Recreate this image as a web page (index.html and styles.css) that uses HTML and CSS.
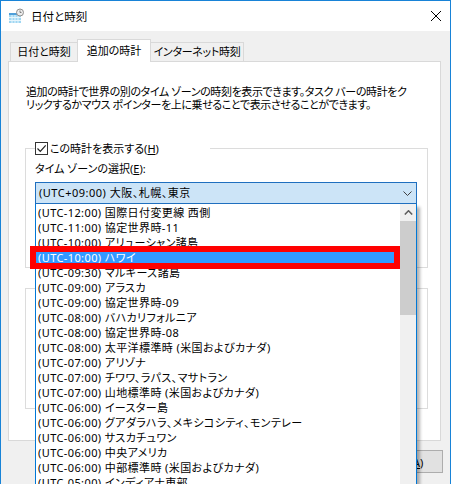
FILE: index.html
```html
<!DOCTYPE html>
<html lang="ja">

<head>
    <meta charset="UTF-8">
    <title>日付と時刻</title>
    <link rel="stylesheet" href="styles.css">
</head>

<body>
    <div class="window">
        <div class="titlebar">
            <svg class="appIcon" width="16" height="16" viewBox="0 0 16 16">
                <rect x="1" y="5" width="12" height="10" fill="#9fd6f2"/>
                <rect x="1" y="5" width="12" height="2" fill="#4f9fd9"/>
                <path d="M1 9.5h12M1 12.5h12M4 7v8M7 7v8M10 7v8" stroke="#e6f5fc" stroke-width="1"/>
                <circle cx="12" cy="4.5" r="3.5" fill="#ececec" stroke="#8f8f8f"/>
                <path d="M12 2.5v2h1.5" stroke="#6a6a6a" stroke-width="0.8" fill="none"/>
            </svg>
            <span class="title">日付と時刻</span>
            <svg class="closeIcon" width="10" height="10" viewBox="0 0 10 10">
                <path d="M0 0L10 10M10 0L0 10" stroke="#000" stroke-width="1"/>
            </svg>
        </div>
        <div class="content">
            <div class="tabs">
                <div class="tab tabDate">日付と時刻</div>
                <div class="tab active">追加の時計</div>
                <div class="tab tabNet">インターネット時刻</div>
            </div>
            <div class="panel">
                <p class="desc">追加の時計で世界の別のタイム ゾーンの時刻を表示できます。タスク バーの時計をク<br>リックするかマウス ポインターを上に乗せることで表示させることができます。</p>
                <fieldset class="group">
                    <legend>
                        <span class="checkbox">
                            <svg width="11" height="11" viewBox="0 0 11 11"><path d="M1.5 5.5l2.8 2.8 5.4-6" stroke="#222" stroke-width="1.2" fill="none"/></svg>
                        </span>
                        <span>この時計を表示する(<u>H</u>)</span>
                    </legend>
                    <div class="fieldLabel">タイム ゾーンの選択(<u>E</u>):</div>
                    <div class="comboWrap">
                        <div class="combo open">
                            <span>(UTC+09:00) 大阪、札幌、東京</span>
                            <svg class="chevron" width="9" height="5" viewBox="0 0 9 5"><path d="M0.5 0.5l4 4 4-4" stroke="#404040" fill="none"/></svg>
                        </div>
                        <div class="dropList">
                            <ul class="items">
                                <li>(UTC-12:00) 国際日付変更線 西側</li>
                                <li>(UTC-11:00) 協定世界時-11</li>
                                <li>(UTC-10:00) アリューシャン諸島</li>
                                <li class="selected">(UTC-10:00) ハワイ</li>
                                <li>(UTC-09:30) マルキーズ諸島</li>
                                <li>(UTC-09:00) アラスカ</li>
                                <li>(UTC-09:00) 協定世界時-09</li>
                                <li>(UTC-08:00) バハカリフォルニア</li>
                                <li>(UTC-08:00) 協定世界時-08</li>
                                <li>(UTC-08:00) 太平洋標準時 (米国およびカナダ)</li>
                                <li>(UTC-07:00) アリゾナ</li>
                                <li>(UTC-07:00) チワワ、ラパス、マサトラン</li>
                                <li>(UTC-07:00) 山地標準時 (米国およびカナダ)</li>
                                <li>(UTC-06:00) イースター島</li>
                                <li>(UTC-06:00) グアダラハラ、メキシコシティ、モンテレー</li>
                                <li>(UTC-06:00) サスカチュワン</li>
                                <li>(UTC-06:00) 中央アメリカ</li>
                                <li>(UTC-06:00) 中部標準時 (米国およびカナダ)</li>
                                <li>(UTC-05:00) インディアナ東部</li>
                            </ul>
                            <div class="scrollbar">
                                <div class="scrollUp">
                                    <svg width="9" height="5" viewBox="0 0 9 5"><path d="M0.8 4.5l3.7-3.7 3.7 3.7" stroke="#606060" stroke-width="1.6" fill="none"/></svg>
                                </div>
                                <div class="thumb"></div>
                            </div>
                            <div class="marker"></div>
                        </div>
                    </div>
                </fieldset>
                <fieldset class="group second"></fieldset>
            </div>
            <div class="buttons">
                <button class="dlgButton">適用(<u>A</u>)</button>
            </div>
        </div>
    </div>
</body>

</html>
```

FILE: styles.css
```css
html, body { margin: 0; padding: 0; overflow: hidden; }
body { font-family: "Noto Sans", "Noto Sans CJK JP", sans-serif; font-size: 11px; color: #000; font-feature-settings: "palt"; background: #fff; }

.window { width: 451px; height: 484px; box-sizing: border-box; border: 1px solid #1883d7; border-bottom: 0; background: #f0f0f0; overflow: hidden; }

.titlebar { height: 30px; background: #fff; display: flex; align-items: center; }
.appIcon { margin-left: 7px; margin-top: -1px; }
.title { margin-left: 7px; line-height: 15px; font-size: 11.5px; }
.closeIcon { margin-left: auto; margin-right: 9px; margin-top: -1px; }

.content { padding: 8px 9px 0 7px; }

.tabs { display: flex; align-items: flex-end; height: 22px; margin-left: 2px; }
.tab { box-sizing: border-box; height: 19px; line-height: 17px; border: 1px solid #d9d9d9; border-bottom: 0; text-align: center; background: #f0f0f0; white-space: nowrap; }
.tabDate { width: 68px; }
.tab.active { width: 74px; height: 23px; line-height: 21px; margin: 0 0 -1px -1px; background: #fff; position: relative; z-index: 1; }
.tabNet { width: 94px; margin-left: -1px; letter-spacing: -0.3px; }

.panel { box-sizing: border-box; height: 380px; border: 1px solid #d9d9d9; background: #fff; padding-top: 23px; }
.desc { margin: 0 0 0 17px; line-height: 13px; white-space: nowrap; letter-spacing: -0.4px; }

.group { box-sizing: border-box; height: 127px; margin: 30px 12px 0 16px; padding: 0 10px 0 9px; border: 1px solid #dcdcdc; min-width: 0; }
.group.second { height: 121px; margin-top: 20px; }
.group legend { display: flex; align-items: center; gap: 2px; width: 175px; height: 15px; padding: 0; line-height: 15px; white-space: nowrap; }
.checkbox { box-sizing: border-box; width: 13px; height: 13px; border: 1px solid #333; display: flex; align-items: center; justify-content: center; background: #fff; }

.fieldLabel { line-height: 15px; white-space: nowrap; margin-top: 5px; }

.comboWrap { position: relative; margin-top: 6px; }
.combo { box-sizing: border-box; height: 22px; border: 1px solid #adadad; background: #e1e1e1; display: flex; align-items: center; justify-content: space-between; padding: 0 4px 0 3px; line-height: 20px; white-space: nowrap; letter-spacing: 0.5px; }
.combo.open { background: #cce4f7; border-color: #1f6fbf; }
.chevron { margin-top: 1px; }

.dropList { position: absolute; top: 100%; left: 0; right: 0; height: 300px; box-sizing: border-box; border: 1px solid #0078d7; border-top: 0; background: #fff; display: flex; z-index: 10; box-shadow: 3px 3px 3px rgba(0, 0, 0, 0.3); }
.items { flex: 1; margin: 0; padding: 1px 0 0; list-style: none; min-width: 0; }
.items li { height: 15px; line-height: 15px; padding-left: 2px; white-space: nowrap; letter-spacing: 0.4px; }
.items li.selected { background: #3399ff; color: #fff; }

.scrollbar { width: 16px; background: #f0f0f0; }
.scrollUp { height: 17px; display: flex; align-items: center; justify-content: center; }
.thumb { height: 94px; background: #cdcdcd; }

.marker { position: absolute; left: -6px; top: 42px; width: 370px; height: 23px; box-sizing: border-box; border: 6px solid #ff0000; }

.buttons { display: flex; justify-content: flex-end; margin: 9px -2px 0 0; }
.dlgButton { width: 75px; height: 23px; box-sizing: border-box; border: 1px solid #adadad; background: #e1e1e1; font-family: inherit; font-size: 11px; color: #000; padding: 0; }
```
